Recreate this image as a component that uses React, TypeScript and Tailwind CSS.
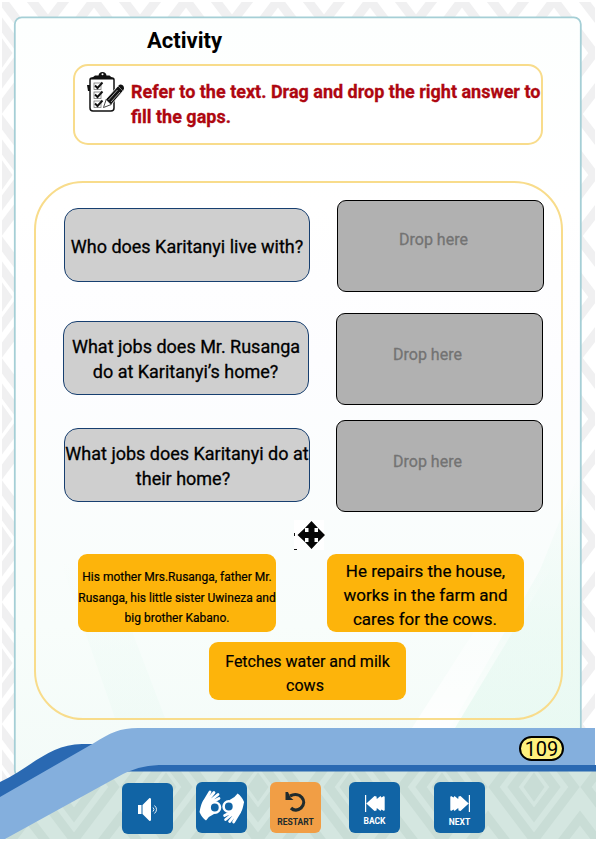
import type { ReactNode } from "react";

function Weave({ id, x, y, ground, stripe }: { id: string; x: number; y: number; ground: string; stripe: string }) {
  return (
    <pattern id={id} width="92" height="122" patternUnits="userSpaceOnUse" x={x} y={y}>
      <rect width="92" height="122" fill={ground} />
      <g fill="none" stroke={stripe} strokeWidth="9">
        <path d="M46 8 86 61 46 114 6 61Z" />
        <path d="M46 33 67 61 46 89 25 61Z" />
        <path d="M46 54 51 61 46 68 41 61Z" />
        <path d="M-23 0 0 30 23 0M69 0 92 30 115 0M-23 122 0 92 23 122M69 122 92 92 115 122" />
      </g>
    </pattern>
  );
}

function Backdrop() {
  return (
    <svg className="absolute inset-0 h-full w-full" viewBox="0 0 596 842" aria-hidden="true">
      <defs>
        <Weave id="weave" x={-44} y={-8} ground="#ffffff" stripe="#f0f0f1" />
        <Weave id="weaveGreen" x={28} y={726} ground="#d4e6e0" stripe="#c9ddd6" />
        <linearGradient id="page" x1="0" y1="0" x2="0" y2="1">
          <stop offset="0" stopColor="#fdfffe" />
          <stop offset=".25" stopColor="#ffffff" />
          <stop offset=".45" stopColor="#fdfdff" />
          <stop offset=".8" stopColor="#f8fdfb" />
          <stop offset="1" stopColor="#f3fbf8" />
        </linearGradient>
        <linearGradient id="mint" x1="0" y1="0" x2="0" y2="1">
          <stop offset="0" stopColor="#e3f8ef" stopOpacity="0" />
          <stop offset=".6" stopColor="#e3f8ef" stopOpacity=".5" />
          <stop offset="1" stopColor="#e3f8ef" stopOpacity=".65" />
        </linearGradient>
        <linearGradient id="glow" x1="0" y1="0" x2="0" y2="1">
          <stop offset="0" stopColor="#fff" stopOpacity="0" />
          <stop offset="1" stopColor="#fff" stopOpacity=".85" />
        </linearGradient>
      </defs>
      <rect width="596" height="842" fill="#fff" />
      <rect x="2" y="2" width="593" height="780" fill="url(#weave)" />
      <rect x="14.8" y="17.3" width="566" height="760" rx="7" fill="url(#page)" stroke="#a5cfd6" strokeWidth="1.8" />
      <path d="M580 470V728H450L540 570Z" fill="url(#mint)" />
      <path d="M520 560H556L455 728H412Z" fill="url(#glow)" />
      <path d="M60 560H105L165 718H115Z" fill="url(#mint)" opacity=".4" />
      <path d="M0 839V800L130 765H596V839Z" fill="url(#weaveGreen)" />
      <path d="M0 782C30 768 50 744 82 744H140V765H596V771.500H110L0 810Z" fill="#2a69b2" />
      <path d="M0 797 94 743C110 733 120 728 138 728H595V765H165C148 765 138 767 123 774L5 839H0Z" fill="#84afdd" />
    </svg>
  );
}

function ChecklistIcon() {
  return (
    <svg width="37" height="41" viewBox="0 0 37 41" aria-hidden="true">
      <path d="M5 6H25Q27 6 27 8V36Q27 39 24 39H6Q3 39 3 36V8Q3 6 5 6Z" fill="#fff" stroke="#111" strokeWidth="1.500" />
      <path d="M3 7.500 8 3.500H11.500Q12 0 15.500 0T19.500 3.500H22.500L27 7.500Z" fill="#111" />
      <circle cx="15.500" cy="2.300" r="1" fill="#fff" />
      <path d="M0 13H3V19H1Z" fill="#111" />
      {[11, 20, 29].map((y) => (
        <g key={y} transform={`translate(7 ${y})`}>
          <rect width="7" height="6.500" fill="#fff" stroke="#777" strokeWidth=".8" />
          <path d="m1 2.500 2.500 2.500 5-5.500" fill="none" stroke="#111" strokeWidth="1.900" />
        </g>
      ))}
      <path d="m16 36 3-9L31 14l5 5-12 14Z" fill="#111" stroke="#fff" strokeWidth=".8" />
      <path d="m16.500 35.500 2.700-8 5 5Z" fill="#fff" stroke="#111" strokeWidth=".7" />
      <path d="m21.500 28 9-10M24 30l9-10" stroke="#fff" strokeWidth=".6" />
      <path d="m31 14 2-1.500q4 0 4 4L36 19Z" fill="#111" />
    </svg>
  );
}

function MoveIcon() {
  return (
    <svg width="31" height="30" viewBox="0 0 31 30" aria-hidden="true">
      <path d="M0 0H30V30H0Z" fill="#fff" />
      <path d="M17.500 1 24 8H20.500V12H24V8L31 15 24 22V18H20.500V22H24L17.500 29 11 22H14.500V18H11V22L3.500 15 11 8V12H14.500V8H11Z" fill="#050505" />
      <path d="M0 13H1V16H0M0 29H3V30H0Z" fill="#111" />
    </svg>
  );
}

function Hand() {
  return (
    <g>
      <path d="M.5 23C1.500 19 2 14 5 11L9 9 16 12 15 25Q10 27 7 31.500Q3 29 .5 23Z" fill="#fff" />
      <g fill="none" stroke="#fff" strokeWidth="2.800" strokeLinecap="round">
        <path d="M5 13 11 3M8 12 15 3.500M11 12 19 5.500M14 12.500 20 9.500" />
      </g>
      <circle cx="15.800" cy="18.500" r="5.200" fill="#1164a5" stroke="#fff" strokeWidth="2.600" />
    </g>
  );
}

function SignLanguageIcon() {
  return (
    <svg width="46" height="37" viewBox="0 0 46 37" aria-hidden="true">
      <Hand />
      <g transform="rotate(180 22.8 18)"><Hand /></g>
    </svg>
  );
}

function SkipIcon({ next = false }: { next?: boolean }) {
  return (
    <svg className={next ? "-scale-x-100" : ""} width="20" height="17" viewBox="0 0 20 17" fill="#fff" aria-hidden="true">
      <path d="M0 0H1.200V17H0ZM1.300 8.500 9.500 1 11.500 1.500 11.800 4 15.500 1 16.500 2.500 19 1 19.700 2V15L19 16 16.500 14.500 15.500 16 11.800 13 11.500 15.500 9.500 16Z" />
    </svg>
  );
}

const rows = [
  { lines: ["Who does Karitanyi live with?"], question: "ml-[28px] mt-[8px] pt-[25px]", drop: "ml-[27px]", hint: "pl-[61px] pt-[27px]", row: "h-[113px]", last: "" },
  { lines: ["What jobs does Mr. Rusanga", "do at Karitanyi’s home?"], question: "ml-[27px] mt-[8px] pt-[12px]", drop: "ml-[27px]", hint: "pl-[56px] pt-[29px]", row: "h-[107px]", last: "pr-[1px]" },
  { lines: ["What jobs does Karitanyi do at", "their home?"], question: "ml-[28px] mt-[8px] pt-[12px]", drop: "ml-[26px]", hint: "pl-[56px] pt-[29px]", row: "h-[102px]", last: "pr-[8px]" },
];

function Lines({ lines, last = "" }: { lines: string[]; last?: string }) {
  return <>{lines.map((line, i) => <div key={line} className={i === lines.length - 1 ? last : ""}>{line}</div>)}</>;
}

function Answer({ lines, className, last }: { lines: string[]; className: string; last?: string }) {
  return (
    <div className={`shrink-0 whitespace-nowrap rounded-[9px] bg-[#fdb40b] text-center [-webkit-text-stroke:0.2px_#000] ${className}`}>
      <Lines lines={lines} last={last} />
    </div>
  );
}

function NavButton({ className, children, label, tone = "bg-[#1164a5] text-white" }: { className: string; children: ReactNode; label?: string; tone?: string }) {
  return (
    <button className={`flex h-[51px] w-[51px] shrink-0 flex-col items-center rounded-[6px] ${tone} ${className}`}>
      {children}
      {label && <span className="text-[8.500px] font-bold leading-[10px]">{label}</span>}
    </button>
  );
}

export default function App() {
  return (
    <div className="relative h-[842px] w-[596px] overflow-hidden bg-white font-['Roboto',sans-serif] text-black">
      <Backdrop />
      <div className="relative flex h-full flex-col">
        <h1 className="ml-[147px] mt-[27px] h-[37px] text-[22px] font-bold leading-[28px]">Activity</h1>
        <section className="ml-[73px] flex h-[81px] w-[470px] shrink-0 rounded-[15px] border-2 border-[#f8dc8b] bg-white">
          <div className="ml-[12px] mt-[6px] w-[37px] shrink-0"><ChecklistIcon /></div>
          <p className="ml-[7px] mt-[13px] whitespace-nowrap text-[18px] font-bold leading-[25px] text-[#ae0710] [-webkit-text-stroke:0.3px_#ae0710]">
            Refer to the text. Drag and drop the right answer to<br />fill the gaps.
          </p>
        </section>

        <main className="ml-[34px] mt-[36px] flex h-[539px] w-[529px] shrink-0 flex-col rounded-[49px] border-2 border-[#f8dc8b] pt-[17px]">
          {rows.map((row) => (
            <div key={row.lines[0]} className={`flex shrink-0 ${row.row}`}>
              <div className={`h-[74px] w-[246px] shrink-0 whitespace-nowrap rounded-[14px] border border-[#173f70] bg-[#cfcfcf] text-center text-[18px] leading-[25px] [-webkit-text-stroke:0.3px_#000] ${row.question}`}>
                <Lines lines={row.lines} last={row.last} />
              </div>
              <div className={`h-[92px] w-[207px] shrink-0 rounded-[9px] border border-black bg-[#b1b1b1] text-[16px] leading-[23px] text-[#737373] [-webkit-text-stroke:0.3px_#737373] ${row.drop} ${row.hint}`}>Drop here</div>
            </div>
          ))}
          <div className="-mt-[2px] ml-[258px] h-[34px] shrink-0"><MoveIcon /></div>
          <div className="flex shrink-0">
            <Answer className="ml-[42px] h-[78px] w-[198px] pt-[13px] text-[12px] leading-[20.500px]" lines={["His mother Mrs.Rusanga, father Mr.", "Rusanga, his little sister Uwineza and", "big brother Kabano."]} />
            <Answer className="ml-[51px] h-[78px] w-[197px] pt-[5px] text-[17px] leading-[24px]" last="pr-[1px]" lines={["He repairs the house,", "works in the farm and", "cares for the cows."]} />
          </div>
          <Answer className="ml-[173px] mt-[10px] h-[58px] w-[197px] pt-[8px] text-[16px] leading-[24px]" last="pr-[5px]" lines={["Fetches water and milk", "cows"]} />
        </main>

        <div className="mt-[16px] flex h-[46px] shrink-0 justify-end pr-[32px]">
          <span className="h-[25px] w-[45px] rounded-full border-2 border-black bg-[#fff17e] text-center text-[20px] leading-[22px]">109</span>
        </div>
        <nav className="flex h-[60px] shrink-0">
          <NavButton className="ml-[122px] mt-px pt-[15px]">
            <svg width="20" height="23" viewBox="0 0 20 23" fill="#fff" aria-hidden="true">
              <path d="M0 7H3.500V16H0ZM4.500 7 11.500 0Q13 0 13 1V22Q13 23 11.500 23L4.500 16Z" />
              <path d="M15 9.500Q17 11.500 15 13.500M16.500 7.500Q20.500 11.500 16.500 15.500" fill="none" stroke="#fff" strokeWidth=".9" />
            </svg>
          </NavButton>
          <NavButton className="ml-[23px] pt-[7px]"><SignLanguageIcon /></NavButton>
          <NavButton className="ml-[23px]" tone="bg-[#f19e45] text-[#202b2d]" label="RESTART">
            <svg className="mb-[4px] mt-[9px] shrink-0" width="21" height="22" viewBox="0 0 21 22" aria-hidden="true">
              <path d="M5 5C15 0 23 10 16 17C13 19.500 9 20 6 17" fill="none" stroke="#202b2d" strokeWidth="3.200" />
              <path d="M.5 1V9H8.500L5.500 6.500 3 1Z" fill="#202b2d" />
            </svg>
          </NavButton>
          <NavButton className="ml-[28px] pt-[13px]" label="BACK"><div className="mb-[4px]"><SkipIcon /></div></NavButton>
          <NavButton className="ml-[34px] pt-[13px]" label="NEXT"><div className="mb-[5px]"><SkipIcon next /></div></NavButton>
        </nav>
      </div>
    </div>
  );
}
